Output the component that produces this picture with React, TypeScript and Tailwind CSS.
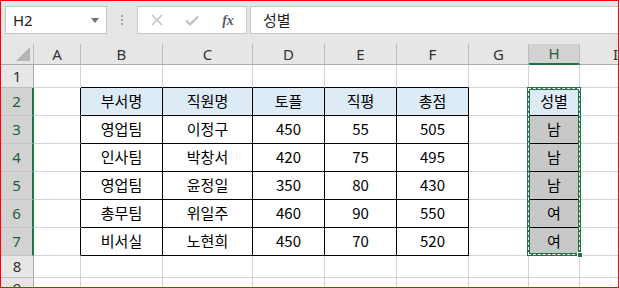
import React from 'react';

const COLS = ['A', 'B', 'C', 'D', 'E', 'F', 'G', 'H', 'I'];
const ROW_H = ['h-[23px]', 'h-[28px]', 'h-[28px]', 'h-[28px]', 'h-[28px]', 'h-[28px]', 'h-[28px]', 'h-[22px]', 'h-[22px]'];

// B..F for rows 2-7, then H
const table: string[][] = [
  ['부서명', '직원명', '토플', '직평', '총점'],
  ['영업팀', '이정구', '450', '55', '505'],
  ['인사팀', '박창서', '420', '75', '495'],
  ['영업팀', '윤정일', '350', '80', '430'],
  ['총무팀', '위일주', '460', '90', '550'],
  ['비서실', '노현희', '450', '70', '520'],
];
const gender = ['성별', '남', '남', '남', '여', '여'];

function cellText(r: number, c: number): string {
  if (r >= 2 && r <= 7) {
    if (c >= 1 && c <= 5) return table[r - 2][c - 1];
    if (c === 7) return gender[r - 2];
  }
  return '';
}

function cellClass(r: number, c: number): string {
  const inRows = r >= 2 && r <= 7;
  const inTable = inRows && c >= 1 && c <= 5;
  const inH = inRows && c === 7;
  const rightBlack = inTable || inH || (inRows && (c === 0 || c === 6));
  const bottomBlack = inTable || inH || (r === 1 && ((c >= 1 && c <= 5) || c === 7));
  let bg = 'bg-white';
  if ((r === 2 && c >= 1 && c <= 5) || (r === 2 && c === 7)) bg = 'bg-[#ddebf7]';
  else if (inH) bg = 'bg-[#c8c8c8]';
  return [
    'flex items-center justify-center border-r border-b',
    rightBlack ? 'border-r-black' : 'border-r-[#d4d4d4]',
    bottomBlack ? 'border-b-black' : 'border-b-[#d4d4d4]',
    bg,
  ].join(' ');
}

export default function App() {
  return (
    <div className="w-[619px] h-[288px] border border-[#ff0000] bg-[#e6e6e6] overflow-hidden font-['Noto_Sans_CJK_KR','Noto_Sans',sans-serif] text-black">
      {/* formula bar */}
      <div className="h-[43px] flex items-start pt-[5px] pl-[4px]">
        <div className="w-[102px] h-[28px] bg-white border border-[#c6c6c6] flex items-center pl-[7px] pr-[7px] text-[15px] text-[#222] font-['Noto_Sans',sans-serif]">
          <span className="flex-1">H2</span>
          <svg width="8" height="5" viewBox="0 0 8 5">
            <path d="M0 0h8L4 5z" fill="#707070" />
          </svg>
        </div>
        <div className="w-[30px] h-[28px] flex flex-col items-center justify-center gap-[2px]">
          <span className="w-[2px] h-[2px] bg-[#a8a8a8]" />
          <span className="w-[2px] h-[2px] bg-[#a8a8a8]" />
          <span className="w-[2px] h-[2px] bg-[#a8a8a8]" />
        </div>
        <div className="w-[110px] h-[28px] bg-white border border-[#c6c6c6] flex items-center">
          <div className="w-[36px] flex justify-center pl-[2px]">
            <svg width="12" height="12" viewBox="0 0 12 12">
              <path d="M1 1l10 10M11 1L1 11" stroke="#bdbdbd" strokeWidth="1.4" />
            </svg>
          </div>
          <div className="w-[36px] flex justify-center">
            <svg width="14" height="11" viewBox="0 0 14 11">
              <path d="M1 5.5l4 4L13 1.5" stroke="#bdbdbd" strokeWidth="2" fill="none" />
            </svg>
          </div>
          <div className="w-[36px] flex justify-center font-['Liberation_Serif',serif] italic font-bold text-[14px] text-[#5a5a5a]">
            fx
          </div>
        </div>
        <div className="flex-1 h-[28px] ml-[3px] bg-white border border-[#c6c6c6] border-r-0 flex items-center pl-[12px] text-[15px] text-[#222]">
          성별
        </div>
      </div>

      {/* sheet */}
      <div className="relative grid grid-cols-[33px_47px_82px_90px_72px_72px_72px_60px_51px_72px]">
        {/* column headers */}
        <div className="h-[21px] border-r border-b border-r-[#bdbdbd] border-b-[#ababab] bg-[#e6e6e6] flex items-end justify-end p-[3px]">
          <svg width="14" height="14" viewBox="0 0 14 14">
            <path d="M14 0V14H0z" fill="#b5b5b5" />
          </svg>
        </div>
        {COLS.map((col, i) =>
          i === 7 ? (
            <div key={col} className="h-[21px] border-r border-r-[#bdbdbd] border-b-2 border-b-[#217346] bg-[#d2d2d2] flex items-center justify-center text-[15px] text-[#1f5e3b] font-['Noto_Sans',sans-serif]">
              {col}
            </div>
          ) : (
            <div key={col} className="h-[21px] border-r border-b border-r-[#bdbdbd] border-b-[#ababab] bg-[#e6e6e6] flex items-center justify-center text-[15px] text-[#333] font-['Noto_Sans',sans-serif]">
              {col}
            </div>
          )
        )}

        {/* rows */}
        {ROW_H.map((h, ri) => {
          const r = ri + 1;
          const sel = r >= 2 && r <= 7;
          return (
            <React.Fragment key={r}>
              <div
                className={`${h} border-b flex items-center justify-center text-[15px] font-['Noto_Sans',sans-serif] ${
                  sel
                    ? 'bg-[#d2d2d2] border-r-2 border-r-[#217346] border-b-[#c4c4c4] text-[#1f5e3b]'
                    : 'bg-[#e6e6e6] border-r border-r-[#ababab] border-b-[#bdbdbd] text-[#333]'
                }`}
              >
                {r}
              </div>
              {COLS.map((_, c) => (
                <div key={c} className={`${h} ${cellClass(r, c)} text-[15px]`}>
                  {cellText(r, c)}
                </div>
              ))}
            </React.Fragment>
          );
        })}

        {/* copy marquee around H2:H7 */}
        <div className="absolute left-[526px] top-[43px] w-[54px] h-[169px] border-[3px] border-[#217346]">
          <div className="absolute -inset-[2px] border border-dashed border-white" />
        </div>
        <div className="absolute left-[576px] top-[208px] w-[6px] h-[6px] bg-[#217346] border border-white" />
      </div>
    </div>
  );
}
